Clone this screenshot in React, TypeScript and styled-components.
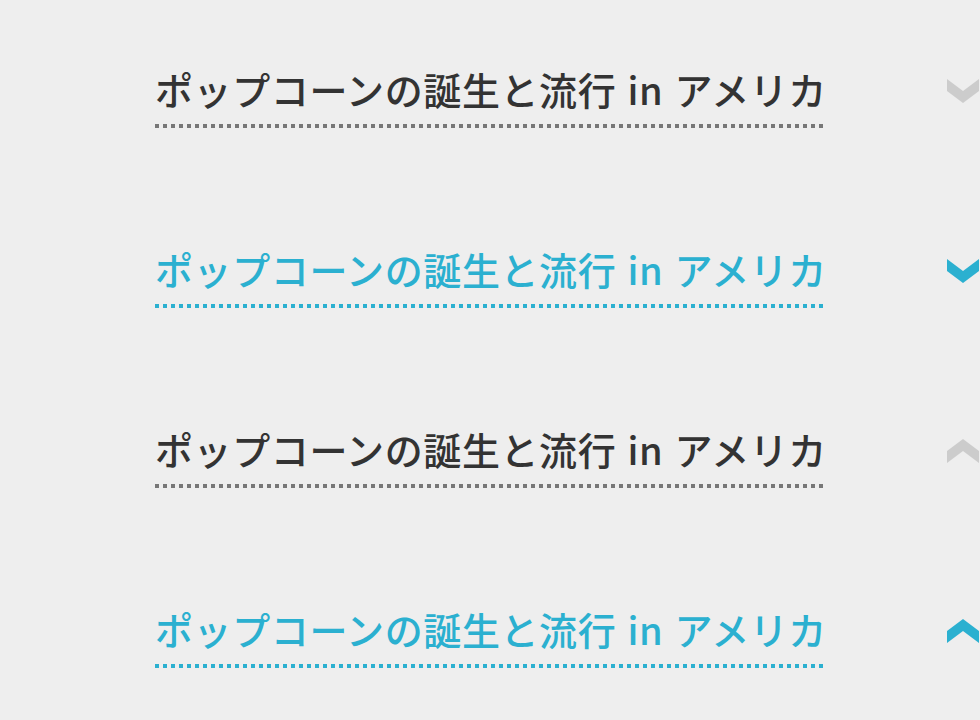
import React from "react";
import styled, { createGlobalStyle } from "styled-components";

const Global = createGlobalStyle`
  html, body { margin: 0; padding: 0; background: #eeeeee; }
  body { font-family: "Noto Sans CJK JP", "Noto Sans", sans-serif; overflow: hidden; }
`;

const List = styled.ul`
  list-style: none;
  margin: 0;
  padding: 0;
  width: 980px;
`;

const Item = styled.li<{ $active: boolean }>`
  height: 180px;
  display: flex;
  align-items: flex-start;
  padding-top: 60px;
  box-sizing: border-box;
  color: ${(p) => (p.$active ? "#2bb0d0" : "#333333")};
`;

const Title = styled.span<{ $active: boolean }>`
  margin-left: 155px;
  font-size: 38px;
  font-weight: 500;
  line-height: 58px;
  letter-spacing: 0.6px;
  padding-bottom: 10px;
  white-space: nowrap;
  word-spacing: 2px;
  background-image: linear-gradient(
    to right,
    ${(p) => (p.$active ? "#2bb0d0" : "#777777")} 4px,
    transparent 4px
  );
  background-size: 8px 4px;
  background-repeat: repeat-x;
  background-position: left bottom;
`;

const Chevron = styled.svg`
  margin-left: auto;
  margin-top: 19px;
  flex: none;
  display: block;
`;

const Arrow = ({ up, color }: { up: boolean; color: string }) => (
  <Chevron width="33" height="25" viewBox="0 0 33 25">
    <polygon
      fill={color}
      points={
        up
          ? "0,12 16,0 32,12 32,24 16,12 0,24"
          : "0,0 16,12 32,0 32,12 16,24 0,12"
      }
    />
  </Chevron>
);

const items = [
  { active: false, up: false },
  { active: true, up: false },
  { active: false, up: true },
  { active: true, up: true },
];

export default function App() {
  return (
    <>
      <Global />
      <List>
        {items.map((it, i) => (
          <Item key={i} $active={it.active}>
            <Title $active={it.active}>ポップコーンの誕生と流行 in アメリカ</Title>
            <Arrow up={it.up} color={it.active ? "#2bb0d0" : "#cccccc"} />
          </Item>
        ))}
      </List>
    </>
  );
}
